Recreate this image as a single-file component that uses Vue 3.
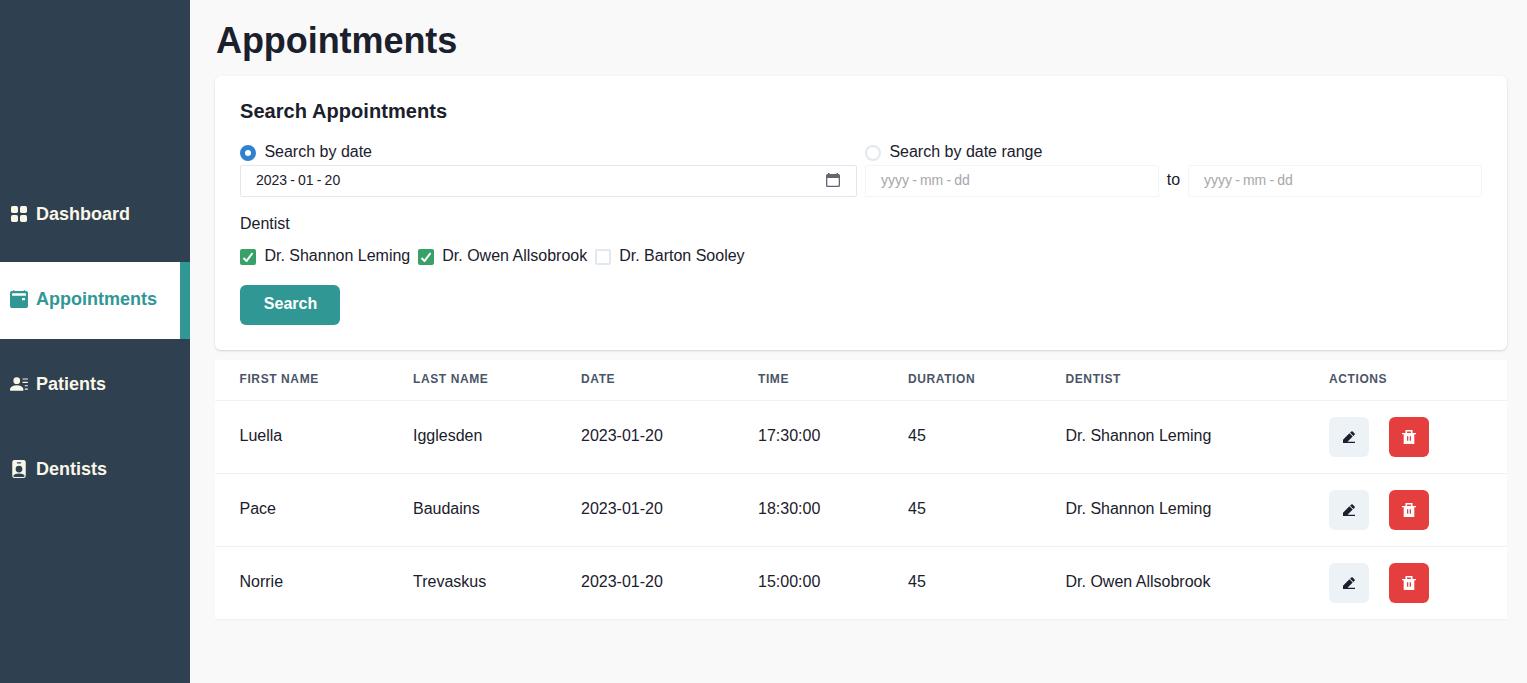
<script setup>
const nav = [
  { label: 'Dashboard', icon: 'grid' },
  { label: 'Appointments', icon: 'calendar', active: true },
  { label: 'Patients', icon: 'person' },
  { label: 'Dentists', icon: 'badge' },
]
const dentists = [
  { name: 'Dr. Shannon Leming', on: true },
  { name: 'Dr. Owen Allsobrook', on: true },
  { name: 'Dr. Barton Sooley', on: false },
]
const heads = ['First name', 'Last name', 'Date', 'Time', 'Duration', 'Dentist', 'Actions']
const rows = [
  ['Luella', 'Igglesden', '2023-01-20', '17:30:00', '45', 'Dr. Shannon Leming'],
  ['Pace', 'Baudains', '2023-01-20', '18:30:00', '45', 'Dr. Shannon Leming'],
  ['Norrie', 'Trevaskus', '2023-01-20', '15:00:00', '45', 'Dr. Owen Allsobrook'],
]
</script>

<template>
  <div class="app">
    <nav class="sidebar">
      <a v-for="n in nav" :key="n.label" class="item" :class="{ active: n.active }">
        <svg v-if="n.icon === 'grid'" class="ico" viewBox="0 0 18 18">
          <rect x="1" y="1" width="7" height="7" rx="1.7" /><rect x="10" y="1" width="7" height="7" rx="1.7" />
          <rect x="1" y="10" width="7" height="7" rx="1.7" /><rect x="10" y="10" width="7" height="7" rx="1.7" />
        </svg>
        <svg v-else-if="n.icon === 'calendar'" class="ico" viewBox="0 0 18 18">
          <path fill-rule="evenodd" d="M3 .2h1.300V1h9.400V.2H15V1h1.200A1.800 1.800 0 0 1 18 2.800V16.200A1.800 1.800 0 0 1 16.200 18H1.800A1.800 1.800 0 0 1 0 16.200V2.800A1.800 1.800 0 0 1 1.800 1H3zM2.500 3.200a.6.6 0 0 0-.5.600v1.400a.6.6 0 0 0 .5.600h13a.6.6 0 0 0 .5-.6V3.800a.6.6 0 0 0-.5-.600zM12.500 8a.5.5 0 0 0-.5.500v1.200a.5.5 0 0 0 .5.500h2a.5.5 0 0 0 .5-.5V8.500a.5.5 0 0 0-.5-.500z" />
        </svg>
        <svg v-else-if="n.icon === 'person'" class="ico" viewBox="0 0 16 16">
          <path d="M6 8a3 3 0 1 0 0-6 3 3 0 0 0 0 6zm-5 6s-1 0-1-1 1-4 6-4 6 3 6 4-1 1-1 1H1zM11 3.500a.5.5 0 0 1 .5-.5h4a.5.5 0 0 1 0 1h-4a.5.5 0 0 1-.5-.5zm.5 2.500a.5.5 0 0 0 0 1h4a.5.5 0 0 0 0-1h-4zm2 3a.5.5 0 0 0 0 1h2a.5.5 0 0 0 0-1h-2zm0 3a.5.5 0 0 0 0 1h2a.5.5 0 0 0 0-1h-2z" />
        </svg>
        <svg v-else class="ico" viewBox="0 0 16 16">
          <path d="M2 2a2 2 0 0 1 2-2h8a2 2 0 0 1 2 2v12a2 2 0 0 1-2 2H4a2 2 0 0 1-2-2V2zm4.500 0a.5.5 0 0 0 0 1h3a.5.5 0 0 0 0-1h-3zM8 11a3 3 0 1 0 0-6 3 3 0 0 0 0 6zm5 2.755C12.146 12.825 10.623 12 8 12s-4.146.826-5 1.755V14a1 1 0 0 0 1 1h8a1 1 0 0 0 1-1v-.245z" />
        </svg>
        <span>{{ n.label }}</span>
      </a>
    </nav>

    <main class="main">
      <h1>Appointments</h1>
      <section class="card">
        <h2>Search Appointments</h2>
        <div class="modes">
          <div class="mode">
            <label class="choice"><i class="radio on"></i>Search by date</label>
            <div class="field">
              <span>2023 - 01 - 20</span>
              <svg class="cal" viewBox="0 0 14 14">
                <path fill-rule="evenodd" d="M2 0h1.500v1h7V0H12v1h.5A1.500 1.500 0 0 1 14 2.500v10a1.500 1.500 0 0 1-1.500 1.500h-11A1.500 1.500 0 0 1 0 12.500v-10A1.500 1.500 0 0 1 1.500 1H2zM1.300 5v7.100q0 .6.600.6h10.200q.6 0 .6-.6V5z" />
              </svg>
            </div>
          </div>
          <div class="mode">
            <label class="choice"><i class="radio"></i>Search by date range</label>
            <div class="range">
              <div class="field off">yyyy - mm - dd</div>
              <span class="to">to</span>
              <div class="field off">yyyy - mm - dd</div>
            </div>
          </div>
        </div>
        <p class="legend">Dentist</p>
        <div class="checks">
          <label v-for="d in dentists" :key="d.name" class="choice">
            <i class="box" :class="{ on: d.on }">
              <svg v-if="d.on" viewBox="0 0 12 10"><polyline points="1.5 6 4.5 9 10.500 1" /></svg>
            </i>{{ d.name }}
          </label>
        </div>
        <button class="search">Search</button>
      </section>

      <section class="table">
        <div class="row head"><span v-for="h in heads" :key="h">{{ h }}</span></div>
        <div v-for="r in rows" :key="r[0]" class="row">
          <span v-for="(c, i) in r" :key="i">{{ c }}</span>
          <div class="actions">
            <button class="btn edit">
              <svg viewBox="0 0 14 14"><path d="M1 13V9.700L7.400 3.300 10.700 6.600 5.500 11.800H13V13zM8.100 2.700 9.300 1.500q.7-.6 1.400 0L12.600 3.400q.6.700 0 1.300L11.400 5.900z" /></svg>
            </button>
            <button class="btn del">
              <svg viewBox="0 0 14 14"><path fill-rule="evenodd" d="M3.500 3V0H10.500V3H14v1.300H12.300V14H1.700V4.300H0V3zM5 3h4V1.500H5zM5 6.200v4.600h1.300V6.200zM7.700 6.200v4.600H9V6.200z" /></svg>
            </button>
          </div>
        </div>
      </section>
    </main>
  </div>
</template>

<style>
body { margin: 0; background: #f9f9f9; }
</style>
<style scoped>
* { box-sizing: border-box; }
.app { display: flex; height: 683px; overflow: hidden; font: 16px/24px "Liberation Sans", Arial, sans-serif; color: #1a202c; }
.sidebar { width: 190px; background: #2f4050; padding-top: 177px; display: flex; flex-direction: column; gap: 8px; flex: none; }
.item { height: 77px; display: flex; align-items: center; gap: 8px; padding: 0 0 3px 10px; color: #f9f7e8; font-size: 18px; font-weight: 700; }
.item.active { background: #fff; color: #319795; border-right: 10px solid #319795; }
.ico { width: 18px; height: 18px; fill: currentColor; flex: none; }
.main { flex: 1; padding: 19px 20px 0 25px; }
h1 { margin: 0 0 14px; font-size: 36px; line-height: 43px; font-weight: 700; padding-left: 1px; letter-spacing: -.06px; }
.card { height: 274px; background: #fff; border-radius: 6px; padding: 23px 25px; box-shadow: 0 1px 3px rgba(0,0,0,.1), 0 1px 2px rgba(0,0,0,.06); }
h2 { margin: 0; font-size: 20px; line-height: 24px; letter-spacing: .06px; }
.modes { display: grid; grid-template-columns: 1fr 1fr; gap: 8px; margin-top: 17px; }
.choice { display: flex; align-items: center; gap: 8.400px; height: 24px; }
.radio, .box { width: 16px; height: 16px; border: 2px solid #e2e8f0; flex: none; position: relative; top: 1px; }
.radio { border-radius: 50%; }
.radio.on { border: 5px solid #3182ce; background: #fff; }
.box { border-radius: 2px; display: grid; place-items: center; }
.box.on { background: #38a169; border-color: #38a169; }
.box svg { width: 12px; height: 10px; fill: none; stroke: #fff; stroke-width: 2; }
.field { height: 32px; margin-top: 1px; border: 1px solid #e2e8f0; border-radius: 2px; padding: 0 16px 2px 15px; font-size: 14px; word-spacing: -.75px; display: flex; align-items: center; justify-content: space-between; flex: 1; }
.off { color: #a6a7aa; border-color: #f3f6f9; justify-content: flex-start; }
.cal { width: 14px; height: 14px; fill: #62666f; }
.range { display: flex; }
.to { width: 29px; text-align: center; line-height: 32px; }
.legend { margin: 15px 0 8px; }
.checks { display: flex; gap: 7.600px; }
.search { margin-top: 17px; width: 100px; height: 40px; border: 0; border-radius: 6px; background: #319795; color: #fff; font: 700 16px/20px "Liberation Sans", Arial, sans-serif; padding: 0 0 3px 1px; display: block; }
.table { margin-top: 10px; background: #fff; }
.row { display: grid; grid-template-columns: 173.500px 168px 177px 150px 157.500px 263.500px 1fr; height: 73px; border-bottom: 1px solid #edf2f7; align-items: center; padding-left: 24.500px; }
.row > span { padding-bottom: 3px; }
.head { height: 41px; font-size: 12px; font-weight: 700; line-height: 16px; text-transform: uppercase; letter-spacing: .6px; color: #4a5568; }
.actions { display: flex; gap: 20px; }
.btn { width: 40px; height: 40px; border: 0; border-radius: 6px; padding: 0; display: grid; place-items: center; }
.btn svg { width: 14px; height: 14px; fill: currentColor; }
.edit { background: #edf2f7; color: #1a202c; }
.del { background: #e53e3e; color: #fff; }
</style>
